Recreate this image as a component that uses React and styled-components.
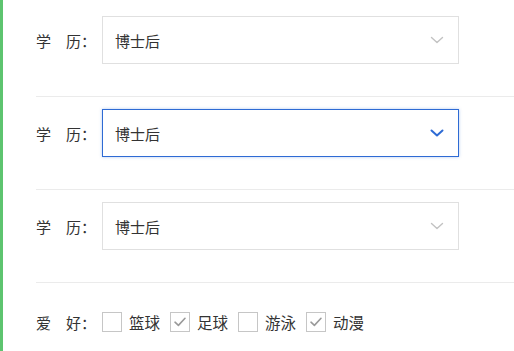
import styled, { createGlobalStyle } from 'styled-components'

const GlobalStyle = createGlobalStyle`
	html, body {
		margin: 0;
		padding: 0;
		background: #fff;
	}
	body {
		font-family: 'Noto Sans CJK SC', 'Noto Sans', sans-serif;
		color: #333;
	}
`

const hobbies = [
	{ name: '篮球', checked: false },
	{ name: '足球', checked: true },
	{ name: '游泳', checked: false },
	{ name: '动漫', checked: true },
]

const Chevron = ({ $active }) => (
	<svg width='14' height='14' viewBox='0 0 14 14' fill='none'>
		<path
			d='M1.5 4.5 L7 9.5 L12.5 4.5'
			stroke={$active ? '#2e6bd4' : '#c2c2c2'}
			strokeWidth={$active ? 2 : 1.4}
			strokeLinecap='round'
			strokeLinejoin='round' />
	</svg>
)

const Check = () => (
	<svg width='16' height='16' viewBox='0 0 16 16' fill='none'>
		<path
			d='M3 8.2 L6.4 11.4 L13 4.3'
			stroke='#9a9a9a'
			strokeWidth='1.6'
			strokeLinecap='round'
			strokeLinejoin='round' />
	</svg>
)

const App = () => {
	return (
		<Page>
			<GlobalStyle />
			<SideBar />
			<Form>
				{[false, true, false].map((active, i) => (
					<FormItem key={i}>
						<Label>学　历：</Label>
						<Select $active={active}>
							<span>博士后</span>
							<Chevron $active={active} />
						</Select>
					</FormItem>
				))}
				<CheckItem>
					<Label>爱　好：</Label>
					<CheckGroup>
						{hobbies.map(h => (
							<CheckOption key={h.name}>
								<Box>{h.checked && <Check />}</Box>
								{h.name}
							</CheckOption>
						))}
					</CheckGroup>
				</CheckItem>
			</Form>
		</Page>
	)
}

const Page = styled.div`
	display: flex;
	width: 514px;
	height: 351px;
	overflow: hidden;
`

const SideBar = styled.div`
	width: 3px;
	flex: none;
	background: #5dc46f;
`

const Form = styled.div`
	flex: 1;
	padding: 4px 0 0 33px;
	display: flex;
	flex-direction: column;
`

const FormItem = styled.div`
	display: flex;
	align-items: center;
	padding: 12px 0 32px;
	border-bottom: 1px solid #ebebeb;
`

const CheckItem = styled.div`
	display: flex;
	align-items: center;
	padding-top: 28px;
`

const Label = styled.div`
	width: 66px;
	flex: none;
	font-size: 15px;
	color: #333;
`

const Select = styled.div`
	box-sizing: border-box;
	width: 357px;
	height: 48px;
	display: flex;
	align-items: center;
	justify-content: space-between;
	padding: 0 14px 0 12px;
	font-size: 15px;
	color: #333;
	background: #fff;
	border: 1px solid ${p => p.$active ? '#2e6bd4' : '#e0e0e0'};
	box-shadow: ${p => p.$active ? '0 0 3px rgba(46, 107, 212, 0.35)' : 'none'};
`

const CheckGroup = styled.div`
	display: flex;
	align-items: center;
`

const CheckOption = styled.label`
	display: flex;
	align-items: center;
	font-size: 15.5px;
	color: #333;
	margin-right: 10px;
`

const Box = styled.span`
	box-sizing: border-box;
	width: 20px;
	height: 20px;
	margin-right: 7px;
	border: 1px solid #c6c6c6;
	background: #fff;
	display: flex;
	align-items: center;
	justify-content: center;
`

export default App
